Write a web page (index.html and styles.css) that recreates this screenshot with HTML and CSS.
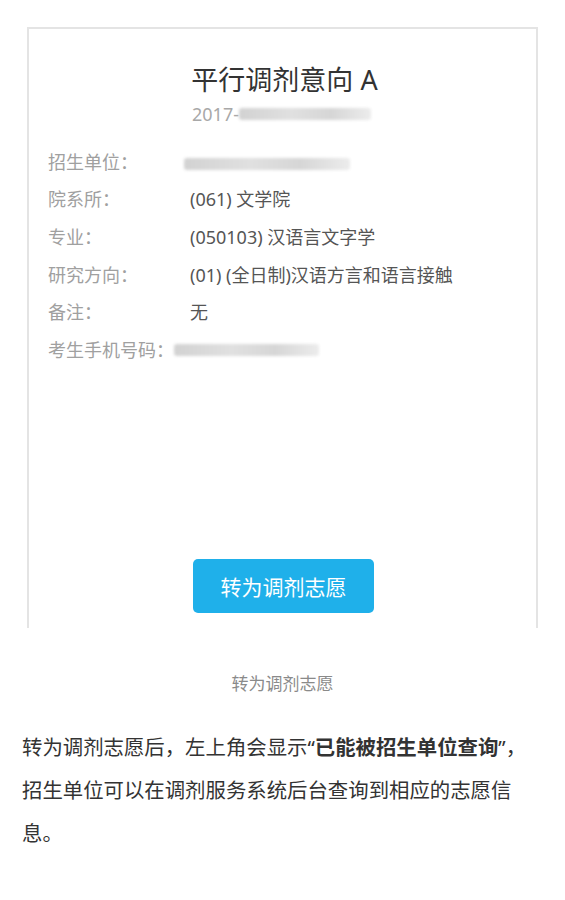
FILE: index.html
```html
<!DOCTYPE html>
<html lang="zh-CN">
<head>
<meta charset="utf-8">
<title>平行调剂意向</title>
<link rel="stylesheet" href="styles.css">
</head>
<body>
<div class="card">
  <h1 class="title">平行调剂意向 A</h1>
  <div class="date">2017-<span class="blur blur-date"></span></div>
  <div class="rows">
    <div class="row"><span class="label">招生单位：</span><span class="value"><span class="blur blur-unit"></span></span></div>
    <div class="row"><span class="label">院系所：</span><span class="value">(061) 文学院</span></div>
    <div class="row"><span class="label">专业：</span><span class="value">(050103) 汉语言文字学</span></div>
    <div class="row"><span class="label">研究方向：</span><span class="value">(01) (全日制)汉语方言和语言接触</span></div>
    <div class="row"><span class="label">备注：</span><span class="value">无</span></div>
    <div class="row"><span class="label label-wide">考生手机号码：</span><span class="blur blur-phone"></span></div>
  </div>
  <div class="actions"><button class="btn">转为调剂志愿</button></div>
</div>
<p class="caption">转为调剂志愿</p>
<p class="text">转为调剂志愿后，左上角会显示“<strong>已能被招生单位查询</strong>”，招生单位可以在调剂服务系统后台查询到相应的志愿信息。</p>
</body>
</html>
```
FILE: styles.css
```css
html, body {
  margin: 0;
  padding: 0;
  background: #fff;
}
body {
  font-family: "Noto Sans", "Noto Sans CJK SC", sans-serif;
  color: #333;
}
.card {
  margin: 27px 27px 0;
  height: 550px;
  border: 2px solid #e4e4e4;
  border-bottom: none;
  display: flex;
  flex-direction: column;
  padding: 34px 0 15px;
}
.title {
  margin: 0;
  font-size: 27px;
  line-height: 34px;
  font-weight: normal;
  color: #333;
  text-align: center;
  padding-left: 4px;
}
.date {
  margin-top: 5px;
  font-size: 18px;
  line-height: 24px;
  color: #a8a8a8;
  padding-left: 163px;
  display: flex;
  align-items: center;
}
.blur {
  display: inline-block;
  height: 12px;
  background: linear-gradient(90deg, #d2d2d2, #e0e0e0 40%, #d6d6d6 70%, #ececec);
  filter: blur(1.5px);
  border-radius: 3px;
}
.blur-date { width: 132px; }
.blur-unit { width: 166px; margin-left: -6px; vertical-align: middle; }
.blur-phone { width: 145px; }
.rows {
  margin-top: 17px;
  padding-left: 19px;
}
.row {
  display: flex;
  align-items: center;
  height: 37.6px;
  font-size: 18px;
  line-height: 24px;
}
.label {
  width: 142px;
  flex: none;
  color: #a0a0a0;
}
.label-wide {
  width: auto;
}
.value {
  color: #555;
}
.actions {
  margin-top: auto;
  display: flex;
  justify-content: center;
}
.btn {
  width: 181px;
  height: 54px;
  border: none;
  border-radius: 5px;
  background: #1fb0ea;
  color: #fff;
  font-family: inherit;
  font-size: 21px;
  padding: 0;
  margin-left: 2px;
}
.caption {
  margin: 44px 0 0;
  text-align: center;
  font-size: 17px;
  line-height: 24px;
  color: #8a8a8a;
}
.text {
  margin: 30px 0 0 22px;
  width: 508px;
  font-size: 20.4px;
  line-height: 43px;
  color: #333;
}
.text strong {
  font-weight: bold;
}
```
